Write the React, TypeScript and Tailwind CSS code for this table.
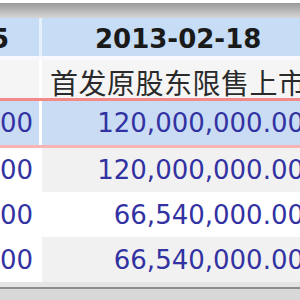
import React from "react";

const num = "font-['DejaVu_Sans',sans-serif] text-[26px] text-[#3232a2] leading-none";

function Row({ left, right, cls, leftBg = "bg-white", rightBg }: { left: string; right: string; cls: string; leftBg?: string; rightBg: string }) {
  return (
    <div className={`flex ${cls}`}>
      <div className={`w-[39px] shrink-0 flex items-center justify-end overflow-hidden pr-[6px] ${leftBg}`}>
        <span className={`whitespace-nowrap ${num}`}>{left}</span>
      </div>
      <div className="w-[3px] shrink-0 bg-white" />
      <div className={`w-[300px] shrink-0 flex items-center justify-end overflow-hidden pr-[38px] ${rightBg}`}>
        <span className={`whitespace-nowrap ${num}`}>{right}</span>
      </div>
    </div>
  );
}

export default function App() {
  return (
    <div className="w-[300px] h-[300px] overflow-hidden bg-white flex flex-col">
      <div className="h-[3px] shrink-0 bg-white" />
      <div className="h-[15px] shrink-0 bg-gradient-to-b from-[#9a9a9a] to-[#d6d6d6]" />
      {/* header */}
      <div className="flex h-[38px] shrink-0 bg-[#c7dcf5]">
        <div className="w-[39px] shrink-0 flex items-center justify-end overflow-hidden pr-[30px] pt-[3px]">
          <span className="whitespace-nowrap font-['DejaVu_Sans',sans-serif] font-bold text-[26px] leading-none text-[#1a1a1a]">2013-02-15</span>
        </div>
        <div className="w-[3px] shrink-0 bg-[#e6f0fb]" />
        <div className="w-[300px] shrink-0 flex items-center overflow-hidden pl-[53px] pt-[3px]">
          <span className="whitespace-nowrap font-['DejaVu_Sans',sans-serif] font-bold text-[26px] leading-none text-[#1a1a1a]">2013-02-18</span>
        </div>
      </div>
      <div className="h-[4px] shrink-0 bg-[#f7f9fc]" />
      {/* row 2 */}
      <div className="flex h-[38px] shrink-0 bg-[#f6f5f5]">
        <div className="w-[39px] shrink-0" />
        <div className="w-[3px] shrink-0 bg-white" />
        <div className="w-[300px] shrink-0 flex items-end overflow-hidden pl-[8px] pb-[2px]">
          <span className="whitespace-nowrap font-['Noto_Sans_CJK_SC',sans-serif] text-[28px] tracking-[0.5px] leading-none text-[#2a2a2a]">首发原股东限售上市流通</span>
        </div>
      </div>
      <div className="h-[3px] shrink-0 bg-[#f28a8a]" />
      <Row left="120,000,000.00" right="120,000,000.00" cls="h-[44px] shrink-0" leftBg="bg-[#c9dcf3]" rightBg="bg-[#c9dcf3]" />
      <div className="h-[3px] shrink-0 bg-[#f6b4b4]" />
      <Row left="120,000,000.00" right="120,000,000.00" cls="h-[44px] shrink-0" rightBg="bg-[#f1f1f1]" />
      <Row left="66,540,000.00" right="66,540,000.00" cls="h-[45px] shrink-0" rightBg="bg-white" />
      <Row left="66,540,000.00" right="66,540,000.00" cls="h-[45px] shrink-0" rightBg="bg-[#f1f1f1]" />
      <div className="h-[5px] shrink-0 bg-[#e4e4e4]" />
      <div className="h-[2px] shrink-0 bg-[#8c8c8c]" />
      <div className="flex-1 bg-[#d8d8d8]" />
    </div>
  );
}
